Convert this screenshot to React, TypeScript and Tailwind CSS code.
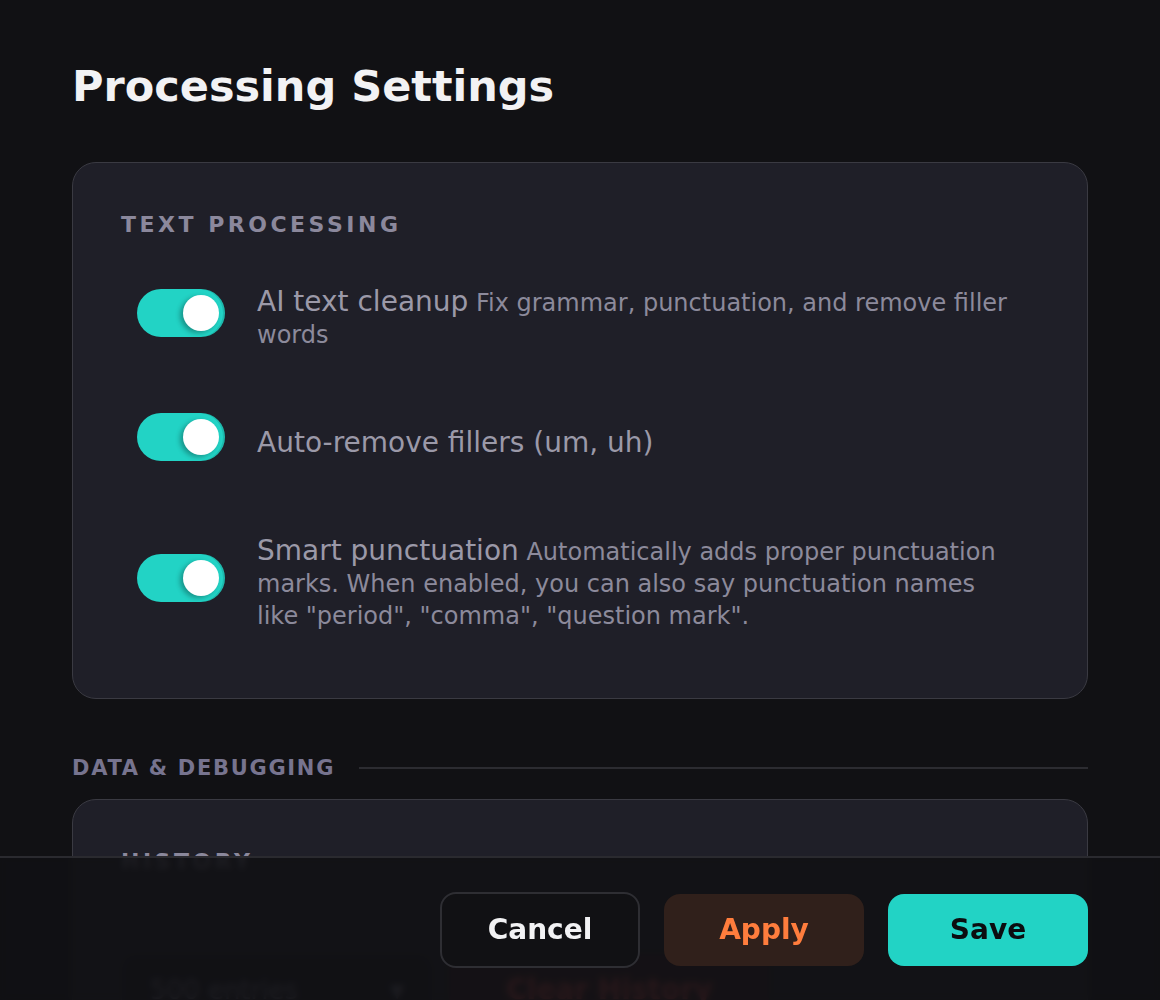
import React from 'react'

const options = [
  {
    label: 'AI text cleanup',
    description: 'Fix grammar, punctuation, and remove filler words',
  },
  {
    label: 'Auto-remove fillers (um, uh)',
    description: '',
  },
  {
    label: 'Smart punctuation',
    description:
      'Automatically adds proper punctuation marks. When enabled, you can also say punctuation names like "period", "comma", "question mark".',
  },
]

function Toggle() {
  return (
    <div className="relative h-12 w-[88px] shrink-0 rounded-full bg-[#22d3c5] shadow-[inset_-2px_0_0_rgba(0,0,0,0.12)]">
      <div className="absolute right-[6px] top-[6px] h-9 w-9 rounded-full bg-white shadow-[-3px_2px_5px_rgba(0,0,0,0.3)]" />
    </div>
  )
}

export default function App() {
  return (
    <div className="min-h-screen bg-[#111114] font-['DejaVu_Sans',sans-serif] text-[#f2f2f4]">
      <div className="px-[72px] pb-[200px] pt-[58px]">
        <h1 className="text-[43px] font-bold leading-[56px] text-[#f2f2f4]">Processing Settings</h1>

        <div className="mt-12 rounded-3xl border border-[#3a3a42] bg-[#1f1f28] px-12 pb-[66px] pt-12">
          <h2 className="mb-[35px] text-[22px] font-bold uppercase leading-[28px] tracking-[3.5px] text-[#8b889c]">
            Text Processing
          </h2>
          <div className="flex flex-col gap-[62px]">
            {options.map((o) => (
              <div key={o.label} className="flex items-center gap-8 pl-4">
                <Toggle />
                <div className="pr-6 pt-3 text-[24px] leading-[32px] text-[#8c8a9b]">
                  <span className="text-[28px] text-[#9b99a8]">{o.label}</span>
                  {o.description && <span> {o.description}</span>}
                </div>
              </div>
            ))}
          </div>
        </div>

        <div className="mb-[17px] mt-[55px] flex items-center gap-6">
          <span className="text-[21px] font-bold uppercase leading-[28px] tracking-[1.7px] text-[#77748f]">
            Data &amp; Debugging
          </span>
          <div className="h-[2px] flex-1 bg-[#2c2c31]" />
        </div>

        <div className="rounded-3xl border border-[#3a3a42] bg-[#1f1f28] px-12 pb-12 pt-12">
          <h2 className="text-[22px] font-bold uppercase leading-[28px] tracking-[3.5px] text-[#8b889c]">History</h2>
          <div className="mt-[78px] flex items-center gap-4">
            <div className="flex h-[72px] w-[312px] items-center justify-between rounded-2xl border border-[#38383f] bg-[#16161b] px-7">
              <span className="text-[26px] text-[#8c8a9b]">500 entries</span>
              <span className="text-[18px] text-[#8c8a9b]">▼</span>
            </div>
            <div className="flex h-[72px] w-[320px] items-center justify-center rounded-2xl bg-[#3a1c20] text-[28px] font-bold text-[#f05252]">
              Clear History
            </div>
          </div>
        </div>
      </div>

      <div className="fixed bottom-0 left-0 right-0 flex items-center justify-end gap-6 border-t-2 border-[#2a2a2f] bg-[#111114]/90 px-[72px] pb-[32px] pt-[34px] backdrop-blur-[3px]">
        <button className="h-[76px] w-[200px] rounded-2xl border-2 border-[#2e2e33] bg-[#111114] text-[28px] font-bold text-[#f2f2f4]">
          Cancel
        </button>
        <button className="h-[72px] w-[200px] rounded-2xl bg-[#30201b] text-[28px] font-bold text-[#ff7d3d]">
          Apply
        </button>
        <button className="h-[72px] w-[200px] rounded-2xl bg-[#22d3c5] text-[28px] font-bold text-[#0b0d10]">
          Save
        </button>
      </div>
    </div>
  )
}
